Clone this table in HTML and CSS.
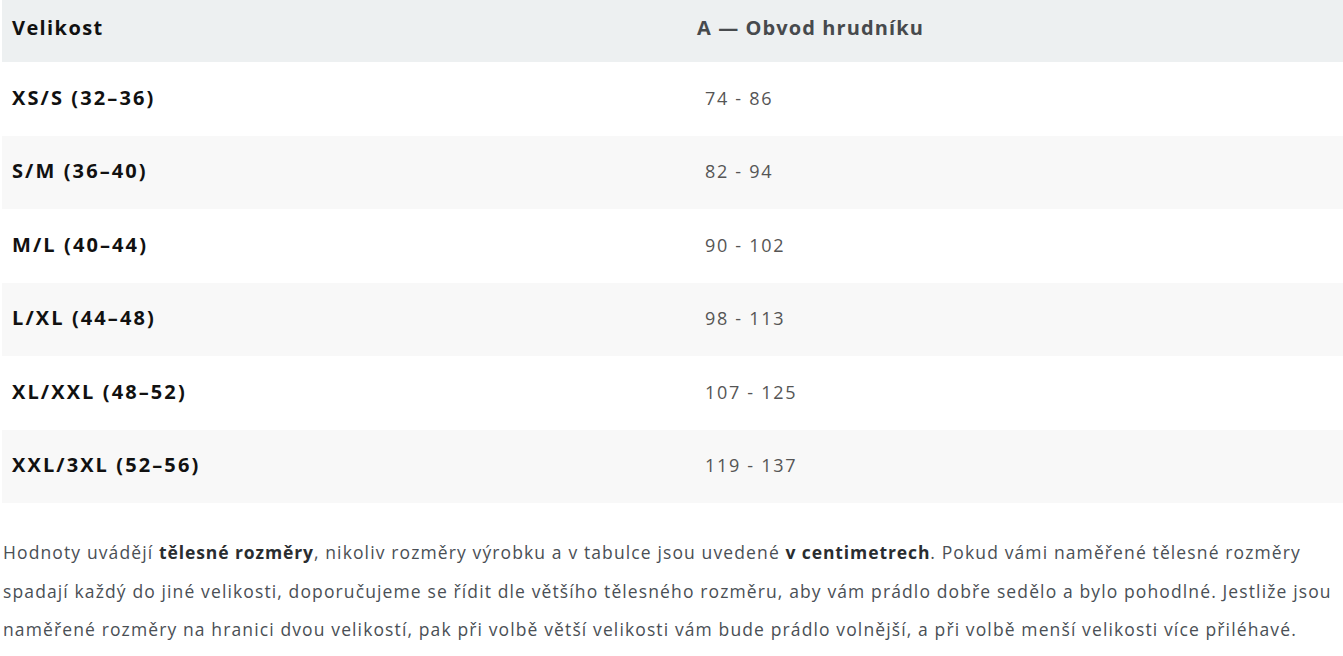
FILE: index.html
```html
<!DOCTYPE html>
<html lang="cs">
<head>
<meta charset="utf-8">
<link rel="stylesheet" href="styles.css">
</head>
<body>
<div class="page">
  <table class="sizes">
    <thead>
      <tr><th class="c1">Velikost</th><th class="c2">A — Obvod hrudníku</th></tr>
    </thead>
    <tbody>
      <tr><td class="c1">XS/S (32–36)</td><td class="c2">74 - 86</td></tr>
      <tr><td class="c1">S/M (36–40)</td><td class="c2">82 - 94</td></tr>
      <tr><td class="c1">M/L (40–44)</td><td class="c2">90 - 102</td></tr>
      <tr><td class="c1">L/XL (44–48)</td><td class="c2">98 - 113</td></tr>
      <tr><td class="c1">XL/XXL (48–52)</td><td class="c2">107 - 125</td></tr>
      <tr><td class="c1">XXL/3XL (52–56)</td><td class="c2">119 - 137</td></tr>
    </tbody>
  </table>
  <p class="note">Hodnoty uvádějí <b>tělesné rozměry</b>, nikoliv rozměry výrobku a v tabulce jsou uvedené <b>v centimetrech</b>. Pokud vámi naměřené tělesné rozměry spadají každý do jiné velikosti, doporučujeme se řídit dle většího tělesného rozměru, aby vám prádlo dobře sedělo a bylo pohodlné. Jestliže jsou naměřené rozměry na hranici dvou velikostí, pak při volbě větší velikosti vám bude prádlo volnější, a při volbě menší velikosti více přiléhavé.</p>
</div>
</body>
</html>
```
FILE: styles.css
```css
html, body { margin: 0; padding: 0; background: #fff; }
.page { padding: 0 0 0 2px; font-family: "Open Sans", "Noto Sans", sans-serif; }
.sizes { width: 100%; border-collapse: collapse; }
.sizes th { background: #edf0f1; height: 56px; text-align: left; font-size: 20px; line-height: 24px; font-weight: 700; padding: 0 0 6px 0; letter-spacing: 1.1px; }
.sizes th.c1 { color: #111; padding-left: 10px; width: 675px; letter-spacing: 1.4px; }
.sizes th.c2 { color: #474a4d; padding-left: 10px; }
.sizes td { height: 71.5px; padding: 0 0 2px 0; line-height: 24px; }
.sizes td.c1 { font-size: 20px; font-weight: 700; color: #111; padding-left: 10px; letter-spacing: 2.1px; }
.sizes td.c2 { font-size: 18px; color: #555; padding-left: 18px; letter-spacing: 1.7px; }
.sizes tbody tr:nth-child(even) td { background: #f8f8f8; }
.note { margin: 30px 0 0 1px; font-size: 17.5px; line-height: 38.5px; color: #4a4f55; letter-spacing: 1.12px; }
.note b { color: #2a2d30; font-weight: 700; letter-spacing: 0.9px; }
```
